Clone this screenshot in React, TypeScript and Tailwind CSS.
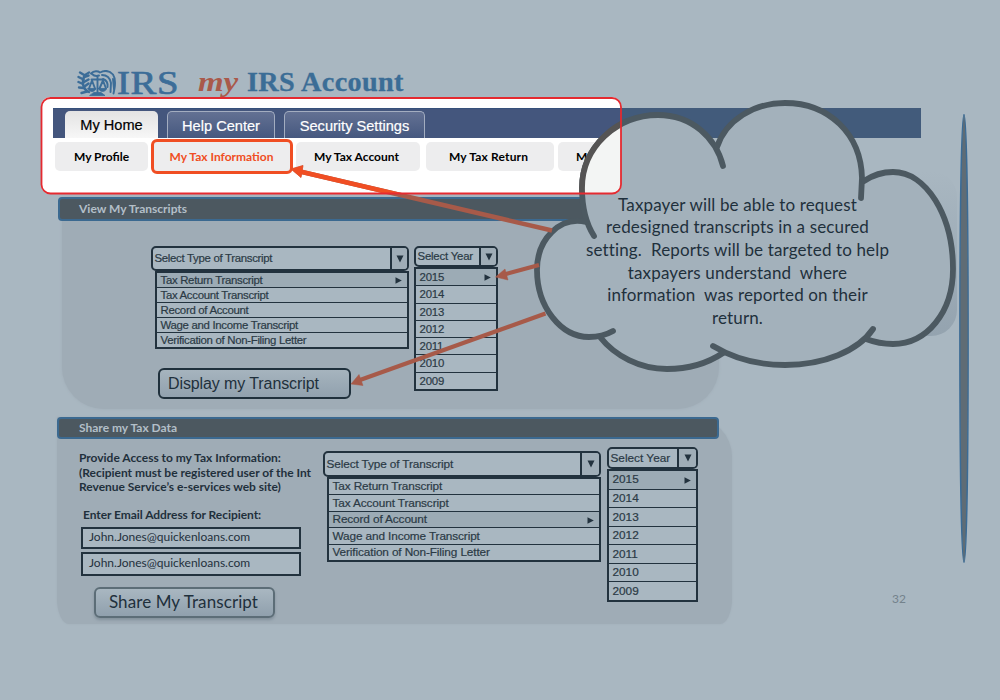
import type { ReactNode } from "react";

const transcriptTypes = [
  "Tax Return Transcript",
  "Tax Account Transcript",
  "Record of Account",
  "Wage and Income Transcript",
  "Verification of Non-Filing Letter",
];
const years = ["2015", "2014", "2013", "2012", "2011", "2010", "2009"];

type DropdownProps = {
  label: string;
  options: string[];
  selected: number;
  className: string;
  headClass: string;
  arrowClass: string;
  listClass: string;
  textClass: string;
};

function Dropdown({ label, options, selected, className, headClass, arrowClass, listClass, textClass }: DropdownProps) {
  return (
    <div
      className={`flex flex-col items-end font-['Liberation_Sans',sans-serif] text-[#2b3a45] [-webkit-text-stroke:0.2px] ${className} ${textClass}`}
    >
      <div className={`flex w-full overflow-hidden rounded-[5px] border-2 border-[#22323e] bg-[#a9b7c1] ${headClass}`}>
        <div className="flex flex-1 items-center whitespace-nowrap pl-[1.5px] pt-px">{label}</div>
        <div className={`flex items-center justify-center border-l-2 border-[#22323e] bg-[#9fadb7] ${arrowClass}`}>
          <svg width="8" height="8" viewBox="0 0 8 8" className="fill-[#22323e]">
            <path d="M0.5 0.5h7L4 7.5z" />
          </svg>
        </div>
      </div>
      <div className={`flex flex-col border-2 border-[#22323e] bg-[#a9b7c1] ${listClass}`}>
        {options.map((o, i) => (
          <div
            key={o}
            className={`flex min-h-0 flex-1 items-center justify-between whitespace-nowrap pl-[3.5px] pr-[5px] pt-px leading-none ${
              i < options.length - 1 ? "border-b-[1.5px] border-[#22323e]" : ""
            } ${i === selected ? "bg-[#9cabb5]" : ""}`}
          >
            <span>{o}</span>
            {i === selected && (
              <svg width="7" height="7" viewBox="0 0 7 7" className="fill-[#22323e]">
                <path d="M0.5 0.2v6.6L6.8 3.5z" />
              </svg>
            )}
          </div>
        ))}
      </div>
    </div>
  );
}

function Eagle() {
  return (
    <svg width="40" height="27" viewBox="0 0 40 27" fill="none" className="shrink-0 stroke-[#3c6d98]" strokeLinecap="round" strokeLinejoin="round">
      <g strokeWidth="2.4">
        <path d="M12 2.500C6 5 5.500 10 6 14c.500 4 2.500 6.500 6 8" />
        <path d="M8 5.500L3 2.500M6.500 9.500L1.500 7M6 14l-4.500-2M7 18l-5-.5M10 21.500L4.500 23M7 7l4.500-1.500M7 12l4.500-2.500M7.500 16.500l4-3" />
      </g>
      <g strokeWidth="1.900">
        <path d="M14 3.500c3-3 7-2.500 9-1 5-2.500 10-1.500 13 2 2 3 2.500 8 1.500 14l-1 5" />
        <path d="M25 5c5 0 8 3 9 8l-.5 9M26 9c3 1 5 4 4.500 8M36 9l1 10" />
        <path d="M15 4c2 2 4 2.500 7 1.500M20.500 6v16M14.500 9.500h12M15 10.500l-3 8M15 10.500l3 8M26 10.500l-3.500 8M26 10.500l3 8" />
      </g>
      <path d="M11 18.500h8c-1 4-7 4-8 0zM21.500 18.500h8c-1 4-7 4-8 0zM13 25.500h15l-4-3h-7z" className="fill-[#3c6d98]" strokeWidth="0.8" />
    </svg>
  );
}

function Tab({ children, className }: { children: ReactNode; className: string }) {
  return (
    <div
      className={`flex h-[27px] items-center justify-center whitespace-nowrap rounded-t-[5px] pt-[3px] text-[14.6px] [-webkit-text-stroke:0.2px] ${className}`}
    >
      {children}
    </div>
  );
}

function SubTab({ children, className }: { children: ReactNode; className: string }) {
  return (
    <div className={`flex h-[29px] shrink-0 items-center whitespace-nowrap rounded-[5px] bg-[#ededee] ${className}`}>
      {children}
    </div>
  );
}

const lobes = [
  "M594 236C587 225 582 208 582 188C582 148 616 115 658 115C692 115 716 138 723 166",
  "M717 147C726 120 754 103 785 103C829 103 861 134 862 178L861 198",
  "M864 181C873 175 882 172 893 172C926 172 953 215 953 269C953 312 927 344 893 344C883 344 874 342 866 339",
  "M873 329C858 351 824 365 785 365C757 365 733 358 713 346",
  "M600 337C615 356 640 369 667 369C688 369 708 363 723 353",
  "M586 222C560 216 537 239 537 270C537 307 561 337 589 337C598 337 606 335 613 331",
];
const cloudBody =
  "M586 222C583 212 582 200 582 188C582 148 616 115 658 115C688 115 710 130 717 147C726 120 754 103 785 103C829 103 861 134 862 178L864 181C873 175 882 172 893 172C926 172 953 215 953 269C953 312 927 344 893 344C883 344 874 342 866 339C848 356 820 365 785 365C760 365 740 361 723 353C708 363 688 369 667 369C640 369 615 356 600 337C596 337 593 337 589 337C561 337 537 307 537 270C537 239 560 216 586 222Z";

function Cloud({ body, line }: { body: string; line: string }) {
  return (
    <g>
      <path d={cloudBody} className={body} />
      {lobes.map((d) => (
        <path key={d} d={d} fill="none" className={line} strokeWidth="5.800" strokeLinecap="round" strokeLinejoin="round" />
      ))}
    </g>
  );
}

function LongArrow({ className }: { className: string }) {
  return (
    <g className={className}>
      <path d="M552 230.500L300 171.500" strokeWidth="4.500" />
      <path d="M291 169L303 165.500L301 177.500Z" strokeWidth="0.500" />
    </g>
  );
}

function Callout() {
  return (
    <svg width="1000" height="700" viewBox="0 0 1000 700" className="absolute left-0 top-0">
      <defs>
        <clipPath id="spot">
          <rect x="41" y="98" width="580" height="96" rx="9" />
        </clipPath>
        <linearGradient id="tail" x1="0" y1="0" x2="0" y2="1">
          <stop offset="0" stopColor="#a9b7c1" />
          <stop offset="1" stopColor="#94a3af" />
        </linearGradient>
      </defs>
      <rect x="850" y="171" width="107" height="165" rx="26" fill="url(#tail)" />
      <Cloud body="fill-[#a3b1bb]" line="stroke-[#4c5961]" />
      <g clipPath="url(#spot)">
        <Cloud body="fill-[#f3f5f4]" line="stroke-[#555454]" />
      </g>
      <LongArrow className="fill-[#a75a49] stroke-[#a75a49]" />
      <g clipPath="url(#spot)">
        <LongArrow className="fill-[#f04e23] stroke-[#f04e23]" />
      </g>
      <g className="fill-[#a75a49] stroke-[#a75a49]">
        <path d="M539 265L504 274.500" strokeWidth="4.200" />
        <path d="M495.500 277L505 269L508 280Z" strokeWidth="0.500" />
        <path d="M545.500 313.500L360 380" strokeWidth="4.200" />
        <path d="M351 384L359 374.500L363 385.500Z" strokeWidth="0.500" />
      </g>
      <rect x="41.500" y="98" width="579.500" height="95.500" rx="9" fill="none" className="stroke-[#e52a30]" strokeWidth="1.800" />
      <ellipse cx="964" cy="338.500" rx="4.200" ry="224" className="fill-[#5f6c75] stroke-[#3a6b96]" strokeWidth="1.300" />
    </svg>
  );
}

export default function App() {
  return (
    <div className="relative flex h-[700px] w-[1000px] flex-col overflow-hidden bg-[#a9b7c1] font-['Lato',sans-serif] text-[12px] text-[#1f303c]">
      <header className="flex h-[97px] shrink-0 items-end pl-[77px] font-['Liberation_Serif',serif] leading-none">
        <div className="flex h-[27px] w-[121px]">
          <Eagle />
          <span className="origin-left scale-x-[1.14] text-[34px] leading-[26px] tracking-[0.5px] text-[#3c6d98] [-webkit-text-stroke:0.7px]">IRS</span>
        </div>
        <h1 className="flex h-[30px] text-[27px] font-bold leading-[30px]">
          <span className="w-[49px] origin-left scale-x-[1.22] italic text-[#a9594a]">my</span>
          <span className="origin-left scale-x-[1.045] whitespace-nowrap tracking-[0.35px] text-[#3b6d96] [-webkit-text-stroke:0.3px]">IRS Account</span>
        </h1>
      </header>

      <nav className="flex h-[97px] shrink-0 pl-[41px]">
        <div className="flex w-[580px] flex-col rounded-[9px] bg-white pl-[12px] pt-[11px]">
          <div className="flex h-[30px] shrink-0 items-end border-t border-[#37517b] bg-[#44567d] pl-[12px] font-['Liberation_Sans',sans-serif] text-white">
            <Tab className="w-[93px] bg-gradient-to-b from-[#e3e3e3] to-[#f7f7f7] text-black">My Home</Tab>
            <Tab className="ml-[9px] w-[108px] border border-b-0 border-[#a3adc0] bg-gradient-to-b from-[#637193] to-[#46587f]">Help Center</Tab>
            <Tab className="ml-[9px] w-[141px] border border-b-0 border-[#a3adc0] bg-gradient-to-b from-[#637193] to-[#46587f]">Security Settings</Tab>
          </div>
          <div className="flex pl-[2px] pt-[4px] font-bold text-black">
            <SubTab className="w-[93px] justify-center">My Profile</SubTab>
            <div className="-mt-[3px] ml-[3px] flex h-[35px] w-[142px] shrink-0 items-center justify-center whitespace-nowrap rounded-[6px] border-[3px] border-[#f04e23] bg-[#ededee] pr-px text-[#f04e23]">
              My Tax Information
            </div>
            <SubTab className="ml-[3px] w-[124px] pl-[18px]">My Tax Account</SubTab>
            <SubTab className="ml-[6px] w-[128px] pl-[23px] tracking-[0.16px]">My Tax Return</SubTab>
            <SubTab className="ml-[4px] w-[62px] pl-[18px]">My</SubTab>
          </div>
        </div>
        <div className="mt-[11px] h-[30px] w-[300px] bg-[#425b7b]" />
      </nav>

      <section className="ml-[62px] mt-[3px] h-[212px] w-[657px] shrink-0 rounded-b-[42px] bg-[#9facb6] shadow-[0_0_3px_#9facb6]">
        <h2 className="-ml-[4px] flex h-[24px] w-[661px] items-center rounded-[4px] border-2 border-[#3b6990] bg-[#4c5860] pl-[19px] font-bold text-[#b3bfc8]">
          View My Transcripts
        </h2>
        <div className="flex h-[147px] items-start gap-[5px] pl-[89px] pt-[25px]">
          <Dropdown
            label="Select Type of Transcript"
            options={transcriptTypes}
            selected={0}
            className="w-[258px]"
            headClass="h-[25px]"
            arrowClass="w-[17px]"
            listClass="h-[78px] w-[254px]"
            textClass="text-[11.4px] tracking-[-0.3px]"
          />
          <Dropdown
            label="Select Year"
            options={years}
            selected={0}
            className="w-[84px]"
            headClass="h-[21px]"
            arrowClass="w-[17px]"
            listClass="h-[124px] w-[84px]"
            textClass="text-[11.4px] tracking-[-0.2px]"
          />
        </div>
        <button className="relative ml-[96px] flex h-[31px] w-[193px] items-center whitespace-nowrap rounded-[6px] border-2 border-[#1f303c] bg-gradient-to-b from-[#a6b4be] to-[#91a1ae] pl-[8px] font-['Liberation_Sans',sans-serif] text-[16px] tracking-[-0.1px]">
          Display my Transcript
        </button>
      </section>

      <section className="ml-[57px] mt-[8px] h-[207px] w-[675px] shrink-0 rounded-b-[12px_26px] rounded-tr-[40px] bg-[#9facb6] shadow-[0_0_2px_#9facb6]">
        <h2 className="flex h-[22px] w-[662px] items-center rounded-[4px] border-2 border-[#3b6990] bg-[#4c5860] pl-[20px] font-bold text-[#b3bfc8]">
          Share my Tax Data
        </h2>
        <div className="flex items-start">
          <div className="w-[266px] pl-[22px] pt-[12px]">
            <p className="whitespace-nowrap font-bold leading-[14.5px] tracking-[-0.02px]">
              Provide Access to my Tax Information:
              <br />
              (Recipient must be registered user of the Int
              <br />
              Revenue Service’s e-services web site)
            </p>
            <p className="ml-[4px] mt-[12px] font-bold leading-[15px] tracking-[-0.06px]">Enter Email Address for Recipient:</p>
            <div className="ml-[2px] mt-[5px] flex h-[22px] w-[220px] items-center border-2 border-[#22323e] bg-[#a9b7c1] pb-px pl-[6px]">
              John.Jones@quickenloans.com
            </div>
            <div className="ml-[2px] mt-[3px] flex h-[24px] w-[220px] items-center border-2 border-[#22323e] bg-[#a9b7c1] pb-px pl-[6px]">
              John.Jones@quickenloans.com
            </div>
            <button className="ml-[15px] mt-[11px] flex h-[31px] w-[181px] items-center justify-center whitespace-nowrap rounded-[6px] border-2 border-[#5c6d77] bg-gradient-to-b from-[#a9b7c1] to-[#90a0ad] pr-[2px] text-[17px] tracking-[0.09px] shadow-[0_2px_3px_#82909b]">
              Share My Transcript
            </button>
          </div>
          <Dropdown
            label="Select Type of Transcript"
            options={transcriptTypes}
            selected={2}
            className="mt-[12px] w-[278px]"
            headClass="h-[26px]"
            arrowClass="w-[19px]"
            listClass="h-[85px] w-[274px]"
            textClass="text-[11.8px] tracking-[-0.12px]"
          />
          <Dropdown
            label="Select Year"
            options={years}
            selected={0}
            className="ml-[6px] mt-[8px] w-[91px]"
            headClass="h-[22px]"
            arrowClass="w-[19px]"
            listClass="h-[133px] w-[91px]"
            textClass="text-[11.8px]"
          />
        </div>
      </section>

      <footer className="flex h-[0px] shrink-0 justify-end pr-[94px]">
        <span className="-mt-[33px] text-[12px] leading-[15px] text-[#74828c]">32</span>
      </footer>

      <Callout />
      <p className="absolute left-[577px] top-[193.5px] w-[321px] whitespace-pre text-center text-[17px] leading-[22.7px] tracking-[0.14px]">
        {"Taxpayer will be able to request\nredesigned transcripts in a secured\nsetting.  Reports will be targeted to help\ntaxpayers understand  where\ninformation  was reported on their\nreturn."}
      </p>
    </div>
  );
}
